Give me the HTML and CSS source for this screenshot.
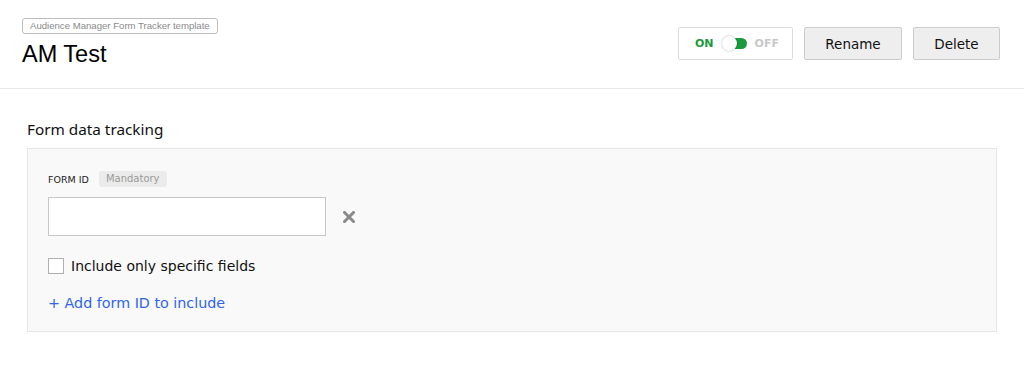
FILE: index.html
```html
<!DOCTYPE html>
<html>
<head>
<meta charset="utf-8">
<link rel="stylesheet" href="styles.css">
</head>
<body>
<header class="header">
  <div class="title-block">
    <span class="template-tag">Audience Manager Form Tracker template</span>
    <h1 class="title">AM Test</h1>
  </div>
  <div class="actions">
    <div class="toggle-box">
      <span class="on">ON</span>
      <span class="switch"><span class="knob"></span></span>
      <span class="off">OFF</span>
    </div>
    <button class="btn rename">Rename</button>
    <button class="btn delete">Delete</button>
  </div>
</header>
<main class="content">
  <h2 class="section-title">Form data tracking</h2>
  <section class="panel">
    <div class="label-row">
      <span class="label">FORM ID</span>
      <span class="badge">Mandatory</span>
    </div>
    <div class="input-row">
      <div class="input"></div>
      <svg class="clear" width="12" height="12" viewBox="0 0 12 12"><path d="M1.5 1.5 L10.5 10.5 M10.5 1.5 L1.5 10.5" stroke="#8a8a8a" stroke-width="3" stroke-linecap="square"/></svg>
    </div>
    <label class="check-row">
      <span class="checkbox"></span>
      <span class="check-label">Include only specific fields</span>
    </label>
    <a class="add-link">+ Add form ID to include</a>
  </section>
</main>
</body>
</html>
```
FILE: styles.css
```css
* { box-sizing: border-box; }
body {
  margin: 0;
  background: #fff;
  font-family: "DejaVu Sans", Verdana, sans-serif;
  color: #111;
}
.header {
  display: flex;
  justify-content: space-between;
  align-items: flex-start;
  height: 89px;
  border-bottom: 1px solid #e8e8e8;
  padding: 18px 24px 0 22px;
}
.title-block {
  display: flex;
  flex-direction: column;
  align-items: flex-start;
}
.template-tag {
  font-family: "Liberation Sans", Arial, sans-serif;
  font-size: 9.6px;
  color: #8a8a8a;
  border: 1px solid #bdbdbd;
  border-radius: 3px;
  height: 16px;
  line-height: 14px;
  padding: 0 7px;
}
.title {
  margin: 6px 0 0 0;
  font-family: "Liberation Sans", Arial, sans-serif;
  font-weight: normal;
  font-size: 23.5px;
  line-height: 28px;
  color: #000;
}
.actions {
  display: flex;
  gap: 11px;
  margin-top: 9px;
}
.toggle-box {
  width: 115px;
  height: 33px;
  border: 1px solid #dcdcdc;
  border-radius: 2px;
  display: flex;
  align-items: center;
  padding-left: 16px;
  font-size: 11px;
  font-weight: bold;
}
.on { color: #1a9a3c; }
.off { color: #c8c8c8; margin-left: 8px; }
.switch {
  position: relative;
  width: 24px;
  height: 11px;
  background: #1a9a3c;
  border-radius: 6px;
  margin-left: 9px;
}
.knob {
  position: absolute;
  left: -1px;
  top: -2px;
  width: 15px;
  height: 15px;
  border-radius: 50%;
  background: #fff;
  box-shadow: 0 0 2px rgba(0,0,0,0.35);
}
.btn {
  height: 33px;
  background: #eeeeee;
  border: 1px solid #cccccc;
  border-radius: 2px;
  font-family: "DejaVu Sans", Verdana, sans-serif;
  font-size: 13.5px;
  color: #111;
  padding: 0;
}
.rename { width: 98px; }
.delete { width: 87px; }
.content {
  padding: 30px 27px 0 27px;
}
.section-title {
  margin: 0;
  font-family: "Noto Sans", "Open Sans", sans-serif;
  font-weight: normal;
  font-size: 15.3px;
  line-height: 20px;
  color: #111;
  height: 29px;
}
.panel {
  width: 970px;
  height: 184px;
  background: #f9f9f9;
  border: 1px solid #e6e6e6;
  padding: 22px 20px 0 20px;
}
.label-row {
  display: flex;
  align-items: center;
  gap: 10px;
  height: 16px;
}
.label {
  font-size: 9.5px;
  color: #222;
  font-family: "DejaVu Sans", Verdana, sans-serif;
}
.badge {
  background: #ebebeb;
  color: #9a9a9a;
  font-size: 10px;
  border-radius: 3px;
  height: 16px;
  line-height: 16px;
  padding: 0 7px;
}
.input-row {
  display: flex;
  align-items: center;
  margin-top: 10px;
  gap: 17px;
}
.input {
  width: 278px;
  height: 39px;
  background: #fff;
  border: 1px solid #c8c8c8;
}
.clear { display: block; }
.check-row {
  display: flex;
  align-items: center;
  margin-top: 22px;
  gap: 7px;
}
.checkbox {
  width: 16px;
  height: 16px;
  background: #fff;
  border: 1px solid #b0b0b0;
}
.check-label {
  font-size: 14px;
  color: #111;
}
.add-link {
  display: block;
  margin-top: 21px;
  color: #2f64ee;
  font-size: 14.3px;
}
```
